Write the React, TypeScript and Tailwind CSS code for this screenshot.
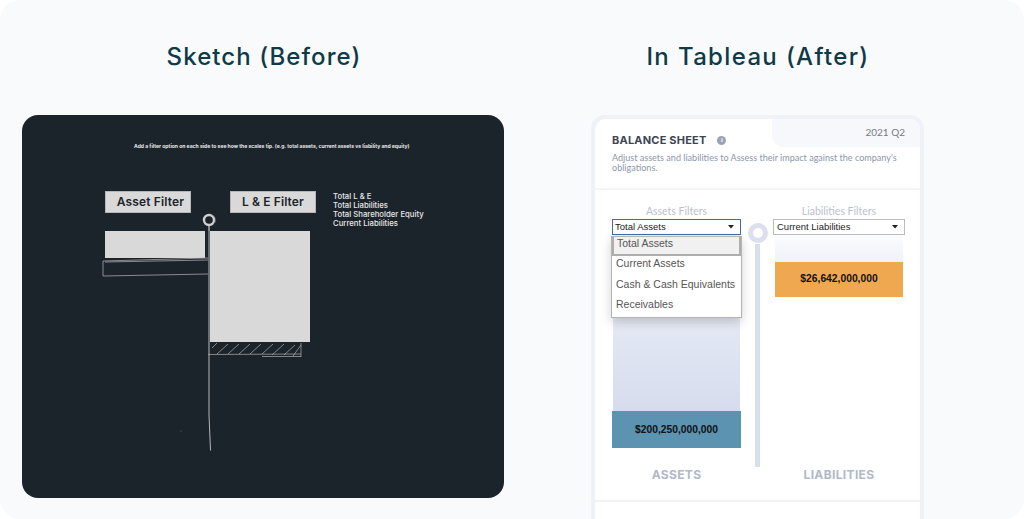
function Arrow() {
  return (
    <svg width="6" height="4" viewBox="0 0 6 4" className="shrink-0">
      <path d="M0 0H6L3 3.500Z" fill="#222" />
    </svg>
  );
}

const items = ["Current Assets", "Cash & Cash Equivalents", "Receivables"];

export default function App() {
  return (
    <div className="w-[1024px] h-[519px] overflow-hidden bg-white">
      <div className="w-[1024px] h-[519px] rounded-[20px] bg-[#f8fafb] overflow-hidden flex flex-col">
        <div className="flex h-[115px] shrink-0 pt-[42px] text-center text-[24px] leading-[30px] font-medium text-[#0f3a47] [font-family:Inter,sans-serif]">
          <h2 className="ml-[23px] w-[482px] tracking-[1.100px]">Sketch (Before)</h2>
          <h2 className="ml-[7px] w-[492px] tracking-[1.350px]">In Tableau (After)</h2>
        </div>
        <div className="flex flex-1 min-h-0 items-start">
          {/* Sketch */}
          <div className="relative ml-[22px] w-[482px] h-[383px] rounded-[16px] bg-[#1c242b] pl-[83px] pt-[28px] text-[#e8e8e8] [font-family:Inter,sans-serif]">
            <p className="ml-[29px] text-[5.050px] leading-[7px] font-bold whitespace-nowrap">
              Add a filter option on each side to see how the scales tip. (e.g. total assets, current assets vs liability and equity)
            </p>
            <div className="mt-[41px] h-[22px] flex items-start">
              <div className="w-[86px] h-[22px] bg-[#d9d9d9] border border-[#b4b6b8] text-[#1c242b] text-[12px] leading-[20px] font-semibold text-center pl-[5px] tracking-[0.150px]">Asset Filter</div>
              <div className="ml-[39px] w-[86px] h-[22px] bg-[#d9d9d9] border border-[#b4b6b8] text-[#1c242b] text-[12px] leading-[20px] font-semibold text-center tracking-[0.100px]">L &amp; E Filter</div>
              <div className="ml-[17px] pt-[1px] text-[7.750px] leading-[8.900px] font-medium">
                <div>Total L &amp; E</div>
                <div>Total Liabilities</div>
                <div>Total Shareholder Equity</div>
                <div>Current Liabilities</div>
              </div>
            </div>
            <div className="mt-[18px] flex items-start gap-[5px]">
              <div className="w-[100px] h-[27px] bg-[#d9d9d9]" />
              <div className="w-[100px] h-[111px] bg-[#d9d9d9]" />
            </div>
            <svg className="absolute left-0 top-0 pointer-events-none" width="482" height="383" fill="none" stroke="#cfcfcf">
              <circle cx="187" cy="105" r="5" strokeWidth="2.400" />
              <path d="M189 100c3 0 5 3 4 8" strokeWidth="0.600" stroke="#8d9194" />
              <path d="M187 110V116" strokeWidth="1.200" />
              <path d="M187 116L187 227L187 300L188.500 335.500" strokeWidth="1" stroke="#b5b8ba" />
              <path d="M81 146L186 143M81 146V161M81 161L186 159M83 147L186 145" strokeWidth="0.800" stroke="#a2a6a9" />
              <path d="M279 228V242M186 239.500L279 239M271 241L279 230M240 241.500H279" strokeWidth="0.700" stroke="#aeb1b3" />
              <path d="M190 233L195 228M195 239L206 229M206 239L217 229M217 239L228 229M228 239L239 229M240 239L251 229M250 240L262 229M262 240L273 230" strokeWidth="0.700" stroke="#aeb1b3" />
              <circle cx="159" cy="316" r="0.500" fill="#777" stroke="none" />
            </svg>
          </div>

          {/* Tableau card */}
          <div className="ml-[87px] w-[333px] h-[404px] rounded-t-[14px] bg-[#eff2f7] px-[4px] pt-[4px]">
            <div className="bg-white rounded-t-[11px] h-full flex flex-col">
              <div className="relative h-[71px] shrink-0 px-[17px] pt-[14px] border-b-2 border-[#f3f5f9]">
                <div className="absolute right-0 top-0 w-[148px] h-[28px] bg-[#f6f8fb] rounded-bl-[12px] rounded-tr-[11px] text-[#757b85] text-[10px] leading-[26px] text-right pr-[15px] [font-family:Lato,sans-serif]">2021 Q2</div>
                <div className="flex items-center gap-[11px] h-[14px]">
                  <span className="text-[11px] font-bold tracking-[0.200px] text-[#3d4652] [font-family:Inter,sans-serif]">BALANCE SHEET</span>
                  <span className="w-[9px] h-[9px] rounded-full bg-[#9aa3b5] text-white text-[6px] leading-[9px] font-bold text-center">i</span>
                </div>
                <p className="mt-[6px] text-[9.050px] leading-[10px] text-[#8d96ab] [font-family:Lato,sans-serif]">Adjust assets and liabilities to Assess their impact against the company's obligations.</p>
              </div>

              <div className="h-[310px] shrink-0 flex pl-[17px] pr-[15px]">
                <div className="w-[129px] flex flex-col pt-[15px]">
                  <div className="text-center text-[10.500px] leading-[12px] text-[#b9c1d0] [font-family:Lato,sans-serif]">Assets Filters</div>
                  <div className="relative mt-[2px]">
                    <div className="h-[16px] border-[1.500px] border-[#3d6ca8] bg-white flex items-center justify-between pl-[2px] pr-[6px] text-[9.500px] text-[#222] [font-family:'Liberation_Sans',sans-serif]">
                      <span>Total Assets</span>
                      <Arrow />
                    </div>
                    <div className="absolute z-10 top-full left-[-1px] right-[-1px] mt-[1px] h-[82px] bg-white border border-[#b4b4b4] shadow-[0_4px_10px_rgba(0,0,0,0.18)] text-[10.500px] text-[#555] [font-family:'Liberation_Sans',sans-serif]">
                      <div className="h-[19px] bg-[#f1f1f1] border-2 border-t-0 border-[#aeaeae] pl-[3px] leading-[12px]">Total Assets</div>
                      {items.map((t) => (
                        <div key={t} className="h-[20.500px] pl-[4px] leading-[14px]">{t}</div>
                      ))}
                    </div>
                  </div>
                  <div className="mx-[1px] h-[176px] bg-gradient-to-b from-[#f3f5fb] to-[#d6dcee]" />
                  <div className="h-[37px] bg-[#5b93b0] text-center text-[10.300px] leading-[37px] font-bold text-[#111] [font-family:'Liberation_Sans',sans-serif]">$200,250,000,000</div>
                  <div className="mt-auto pb-[17px] text-center text-[12px] leading-[16px] font-bold tracking-[0.350px] text-[#b0b9c9] [font-family:Inter,sans-serif]">ASSETS</div>
                </div>

                <div className="w-[32px] pl-[1px] pt-[33px] flex flex-col items-center">
                  <div className="w-[20px] h-[20px] rounded-full border-[5.500px] border-[#dbe0ec]" />
                  <div className="mt-[1px] w-[5px] h-[223px] bg-[#d9deeb] rounded-b-[1px]" />
                </div>

                <div className="w-[132px] flex flex-col pt-[15px]">
                  <div className="text-center text-[10.500px] leading-[12px] text-[#b9c1d0] [font-family:Lato,sans-serif]">Liabilities Filters</div>
                  <div className="mt-[2px] h-[16px] border border-[#bbbbbb] bg-white flex items-center justify-between pl-[3px] pr-[6px] text-[9.500px] text-[#222] [font-family:'Liberation_Sans',sans-serif]">
                    <span>Current Liabilities</span>
                    <Arrow />
                  </div>
                  <div className="mx-[2px] h-[27px] bg-gradient-to-b from-[#fbfcfe] to-[#f0f2fa]" />
                  <div className="mx-[2px] h-[35px] bg-[#f0a850] text-center text-[10.300px] leading-[33px] font-bold text-[#111] [font-family:'Liberation_Sans',sans-serif]">$26,642,000,000</div>
                  <div className="mt-auto pb-[17px] text-center text-[12px] leading-[16px] font-bold tracking-[0.350px] text-[#b0b9c9] [font-family:Inter,sans-serif]">LIABILITIES</div>
                </div>
              </div>
              <div className="flex-1 border-t-2 border-[#f0f2f7]" />
            </div>
          </div>
        </div>
      </div>
    </div>
  );
}
